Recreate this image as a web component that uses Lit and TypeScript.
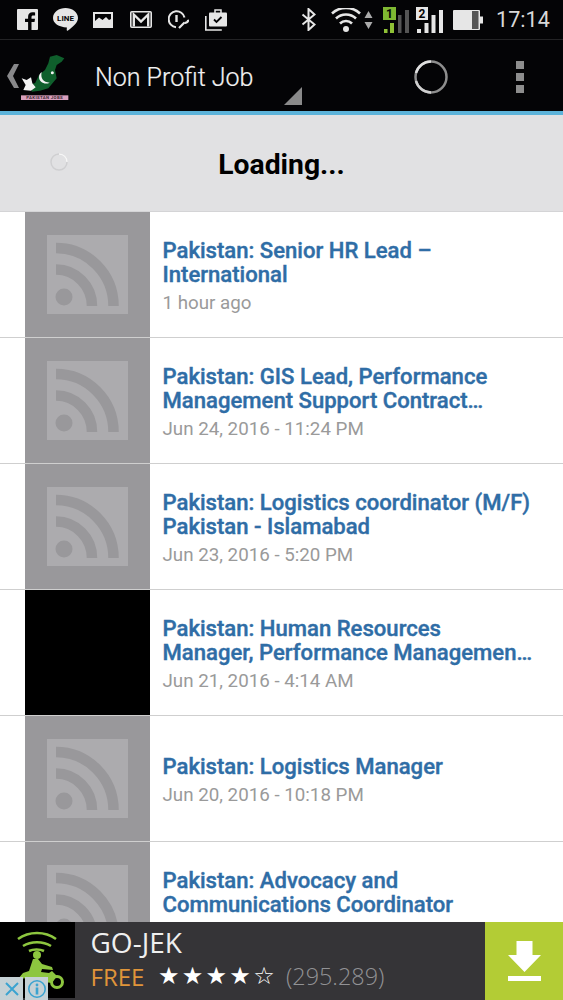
import { LitElement, html, css, svg } from "lit";
import { customElement } from "lit/decorators.js";

const items = [
  { t: "Pakistan: Senior HR Lead –\nInternational", d: "1 hour ago" },
  { t: "Pakistan: GIS Lead, Performance\nManagement Support Contract…", d: "Jun 24, 2016 - 11:24 PM" },
  { t: "Pakistan: Logistics coordinator (M/F)\nPakistan - Islamabad", d: "Jun 23, 2016 - 5:20 PM" },
  { t: "Pakistan: Human Resources\nManager, Performance Managemen…", d: "Jun 21, 2016 - 4:14 AM", black: true },
  { t: "Pakistan: Logistics Manager", d: "Jun 20, 2016 - 10:18 PM" },
  { t: "Pakistan: Advocacy and\nCommunications Coordinator", d: "" },
];

const rss = svg`<svg class="rss" viewBox="0 0 81 79">
  <rect width="81" height="79" fill="#acabae"/>
  <circle cx="17" cy="62" r="8.5" fill="#99989b"/>
  <path d="M9 34.5A36 36.5 0 0 1 45 71" fill="none" stroke="#99989b" stroke-width="10.5"/>
  <path d="M9 13A57.5 58 0 0 1 66.5 71" fill="none" stroke="#99989b" stroke-width="10.5"/>
</svg>`;

@customElement("app-root")
export class AppRoot extends LitElement {
  static styles = css`
    :host { display: block; width: 563px; height: 1000px; overflow: hidden; font-family: Roboto, sans-serif; background: #fff; }
    .page { height: 1000px; display: flex; flex-direction: column; }
    .status { height: 39px; flex: none; background: #040406; border-bottom: 1px solid #232325; display: flex; align-items: center; padding-left: 17px; color: #e6e6e6; }
    .status svg { display: block; flex: none; }
    .ls { display: flex; align-items: center; }
    .rs { display: flex; align-items: center; margin-left: auto; }
    .g15 { margin-left: 15px; }
    .g16 { margin-left: 16px; }
    .g17 { margin-left: 17px; }
    .g3 { margin-left: 3px; }
    .g10 { margin-left: 10px; }
    .g7 { margin-left: 7px; }
    .clock { font-size: 21.6px; width: 54px; margin-left: 13px; margin-right: 13px; color: #d8d8d8; white-space: nowrap; }
    .bar { height: 71px; flex: none; background: #040406; display: flex; align-items: center; position: relative; }
    .chev { width: 25px; flex: none; margin-left: 3px; margin-top: 1px; }
    .logo { position: absolute; left: 15px; top: 10px; }
    .name { color: #f2f2f2; font-size: 25px; font-weight: 300; margin-left: 67px; margin-top: 4px; flex: none; -webkit-text-stroke: 0.2px #f2f2f2; }
    .tri { position: absolute; left: 283px; top: 46px; }
    .spin { position: absolute; left: 413px; top: 19px; }
    .dots { position: absolute; left: 516px; top: 21px; display: flex; flex-direction: column; gap: 4px; }
    .dots i { display: block; width: 8px; height: 8px; background: #8d8d8d; }
    .blue { height: 4px; flex: none; background: #5cb3da; }
    .load { height: 96px; flex: none; background: #e1e1e3; display: flex; align-items: center; justify-content: center; position: relative; border-bottom: 1px solid #d4d4d6; }
    .load b { font-size: 28.3px; font-weight: 700; color: #000; margin-top: 2px; }
    .load svg { position: absolute; left: 49px; top: 37px; }
    .list { flex: 1; min-height: 0; overflow: hidden; }
    .row { height: 125px; border-bottom: 1px solid #cfcfcf; padding-left: 25px; display: flex; align-items: center; }
    .thumb { width: 125px; height: 125px; flex: none; background: #99989b; display: flex; align-items: center; justify-content: center; }
    .thumb.black { background: #000; }
    .rss { width: 81px; height: 79px; display: block; }
    .text { margin-left: 12.5px; min-width: 0; padding-top: 4px; }
    .title { color: #2f6da6; font-size: 22.1px; font-weight: 500; line-height: 24px; white-space: pre; -webkit-text-stroke: 0.4px #2f6da6; }
    .date { color: #9a9a9a; font-size: 18.75px; line-height: 24px; margin-top: 5px; min-height: 24px; }
    .ad { height: 78px; flex: none; background: #353437; display: flex; position: relative; font-family: "Open Sans", sans-serif; }
    .icon { width: 75px; height: 76px; background: #000; flex: none; }
    .info { margin-left: 15.5px; flex: 1; min-width: 0; }
    .app { color: #efefef; font-size: 28px; line-height: 36px; margin-top: 2px; }
    .meta { display: flex; align-items: center; height: 34px; margin-top: -1px; white-space: nowrap; }
    .free { color: #e0953a; font-size: 24px; }
    .stars { color: #fff; font-size: 24px; margin-left: 13.5px; letter-spacing: 2.3px; font-family: "DejaVu Sans", sans-serif; }
    .count { color: #929295; font-size: 23.4px; margin-left: 9px; font-weight: 300; }
    .dl { width: 78px; flex: none; background: #b3cc35; display: flex; align-items: center; justify-content: center; }
    .badges { position: absolute; left: 0; bottom: 0; display: flex; gap: 2px; }
    .badges span { width: 23px; height: 23px; background: #c5d1d5; display: flex; align-items: center; justify-content: center; }
  `;

  render() {
    return html`<div class="page">
      <div class="status">
        <div class="ls">
          <svg width="21" height="21" viewBox="0 0 21 21"><rect width="21" height="21" rx="1" fill="#e6e6e6"/><path d="M14.500 21v-8h3l.5-3.200h-3.500V8c0-1 .4-1.600 1.700-1.600h1.900V3.400c-.6-.1-1.600-.2-2.600-.2-2.700 0-4.400 1.600-4.400 4.400v2.200H8V13h3.100v8z" fill="#040406"/></svg>
          <svg class="g15" width="25" height="23" viewBox="0 0 25 23"><path d="M12.500 0C19 0 25 4 25 10c0 5-5.500 9-10 12.500-.6.5-1.400.2-1.300-.7l.2-2.300C6 19 0 15.500 0 10 0 4 6 0 12.500 0z" fill="#e6e6e6"/><text x="12.500" y="12.500" font-family="Roboto" font-size="8" font-weight="700" text-anchor="middle" fill="#040406">LINE</text></svg>
          <svg class="g15" width="20" height="16" viewBox="0 0 20 16"><rect width="20" height="16" fill="#e6e6e6"/><path d="M2 2h16v5l-2 1-3-3-3.500 3L6 5.500 2 9z" fill="#040406"/></svg>
          <svg class="g17" width="22" height="17" viewBox="0 0 22 17"><rect x="0.800" y="0.800" width="20.400" height="15.400" rx="1" fill="none" stroke="#e6e6e6" stroke-width="1.600"/><path d="M3.800 15.500V3.500L11 10.500 18.200 3.500V15.500" fill="none" stroke="#e6e6e6" stroke-width="2.400"/></svg>
          <svg class="g16" width="21" height="19" viewBox="0 0 21 19"><path d="M8 17.200A8 8 0 1 1 16.500 7.500" fill="none" stroke="#e6e6e6" stroke-width="2"/><path d="M7.300 5h2.400v7H7.300z" fill="#e6e6e6"/><path d="M11 18l5.500-5.500m0 0a2.500 2.500 0 0 0 3.500-2.800" fill="none" stroke="#e6e6e6" stroke-width="2.200"/></svg>
          <svg class="g16" width="22" height="22" viewBox="0 0 22 22"><path d="M.8 7v14h16" fill="none" stroke="#e6e6e6" stroke-width="1.600"/><rect x="4" y="3.500" width="18" height="14" rx="1" fill="#e6e6e6"/><path d="M10 4V1h6v3" fill="none" stroke="#e6e6e6" stroke-width="1.500"/><path d="M9 10.500l2.500 2.500 5-5" fill="none" stroke="#040406" stroke-width="1.800"/></svg>
        </div>
        <div class="rs">
          <svg width="15" height="23" viewBox="0 0 15 23"><path d="M1.500 6.500l12 10-6 5.500V1l6 5.500-12 10" fill="none" stroke="#e6e6e6" stroke-width="2"/></svg>
          <svg class="g15" width="30" height="24" viewBox="0 0 30 24"><circle cx="15" cy="21" r="3" fill="#e6e6e6"/><path d="M9 15.500a8.500 8.500 0 0 1 12 0M5 10.500a14.500 14.500 0 0 1 20 0M1 5.500a20.500 20.500 0 0 1 28 0" fill="none" stroke="#e6e6e6" stroke-width="2.600"/></svg>
          <svg class="g3" width="9" height="20" viewBox="0 0 9 20"><path d="M4.500 1L8.500 8H.5zM4.500 19L.5 12h8z" fill="#aaa"/></svg>
          <svg class="g10" width="26" height="26" viewBox="0 0 26 26"><rect x="0" y="0" width="13" height="13" fill="#7fb832"/><text x="6.500" y="11" font-family="Roboto" font-size="12" font-weight="700" text-anchor="middle" fill="#040406">1</text><rect x="1" y="22" width="3.500" height="4" fill="#8fc136"/><rect x="7" y="16" width="4" height="10" fill="#8fc136"/><rect x="15" y="8" width="3.500" height="18" fill="#555"/><rect x="22" y="3" width="4" height="23" fill="#555"/></svg>
          <svg class="g7" width="27" height="26" viewBox="0 0 27 26"><rect x="0" y="0" width="12" height="13" fill="#e6e6e6"/><text x="6" y="11" font-family="Roboto" font-size="12" font-weight="700" text-anchor="middle" fill="#040406">2</text><rect x="1" y="22" width="4" height="4" fill="#e6e6e6"/><rect x="8.500" y="16" width="4" height="10" fill="#e6e6e6"/><rect x="15.500" y="8" width="4" height="18" fill="#e6e6e6"/><rect x="23" y="3" width="4" height="23" fill="#e6e6e6"/></svg>
          <svg class="g10" width="30" height="20" viewBox="0 0 30 20"><rect width="27" height="20" rx="1" fill="#e6e6e6"/><rect x="19" y="1" width="6.500" height="18" fill="#555"/><rect x="27" y="6.500" width="3" height="7" fill="#e6e6e6"/></svg>
          <span class="clock">17:14</span>
        </div>
      </div>
      <div class="bar">
        <svg class="chev" height="26" viewBox="0 0 25 26"><path d="M11 1L4 13l7 12h5L10 13 16 1z" fill="#88888a"/></svg>
        <svg class="logo" width="60" height="55" viewBox="0 0 180 165">
          <path d="M105 20L125 15 148 25 140 35 125 45 120 60 125 85 100 115 75 122 50 125 55 100 60 100 72 75 90 60 100 40z" fill="#0f5f2c"/>
          <path d="M20 85L35 90 48 82 52 100 62 112 48 122 25 120 32 105z" fill="#f3f3f3"/>
          <path d="M80 66C76 84 84 97 104 98 90 105 72 97 72 81 72 75 75 69 80 66z" fill="#f3f3f3"/>
          <circle cx="112" cy="68" r="4.500" fill="#f3f3f3"/>
          <rect x="18" y="136" width="142" height="14" fill="#d9a0bd"/>
          <text x="89" y="147.500" font-family="Roboto" font-size="13" font-weight="700" text-anchor="middle" letter-spacing="1" fill="#3a2a33">PAKISTAN JOBS</text>
        </svg>
        <span class="name">Non Profit Job</span>
        <svg class="tri" width="20" height="20" viewBox="0 0 20 20"><path d="M19 1v18H1z" fill="#8a8a8a"/></svg>
        <svg class="spin" width="36" height="36" viewBox="0 0 36 36"><circle cx="18" cy="18" r="15.500" fill="none" stroke="#8e8e8e" stroke-width="2.500"/><path d="M3 14A15.500 15.500 0 0 1 18 2.500" fill="none" stroke="#dfdfdf" stroke-width="2.500"/><path d="M3 22A15.500 15.500 0 0 0 18 33.500" fill="none" stroke="#cfcfcf" stroke-width="2.500"/></svg>
        <div class="dots"><i></i><i></i><i></i></div>
      </div>
      <div class="blue"></div>
      <div class="load">
        <svg width="20" height="20" viewBox="0 0 20 20"><circle cx="10" cy="10" r="8" fill="none" stroke="#cfcfd1" stroke-width="1.500"/><path d="M10 2a8 8 0 0 1 8 8" fill="none" stroke="#f6f6f6" stroke-width="1.500"/></svg>
        <b>Loading...</b>
      </div>
      <div class="list">
        ${items.map((it) => html`<div class="row">
          <div class="thumb ${it.black ? "black" : ""}">${it.black ? "" : rss}</div>
          <div class="text">
            <div class="title">${it.t}</div>
            <div class="date">${it.d}</div>
          </div>
        </div>`)}
      </div>
      <div class="ad">
        <div class="icon">
          <svg width="75" height="76" viewBox="0 0 75 76">
            <path d="M18 17c11-8 27-8 38 0M23 24c8-5 20-5 28 0M29 29c4-2 11-2 15 0" fill="none" stroke="#8dc63f" stroke-width="2.600"/>
            <circle cx="37" cy="33" r="4" fill="#8dc63f"/>
            <path d="M33 37l5 0 4 5 10 3 1 3-11-1-1 3 8 1 3-2 5 5-5 7-8-1-6-5-20 2 5-6 6-2z" fill="#8dc63f"/>
            <circle cx="57" cy="60" r="5.500" fill="none" stroke="#8dc63f" stroke-width="3"/>
          </svg>
        </div>
        <div class="info">
          <div class="app">GO-JEK</div>
          <div class="meta"><span class="free">FREE</span><span class="stars">★★★★☆</span><span class="count">(295.289)</span></div>
        </div>
        <div class="dl">
          <svg width="33" height="40" viewBox="0 0 33 40"><path d="M8.500 0h16v14H33L16.500 31 0 14h8.500z" fill="#fff"/><rect y="35" width="33" height="5" fill="#fff"/></svg>
        </div>
        <div class="badges">
          <span><svg width="16" height="16" viewBox="0 0 16 16"><path d="M2 2l12 12M14 2L2 14" stroke="#3ba3d0" stroke-width="2"/></svg></span>
          <span><svg width="20" height="20" viewBox="0 0 20 20"><circle cx="10" cy="10" r="8.200" fill="none" stroke="#3ba3d0" stroke-width="1.600"/><circle cx="10" cy="6" r="1.400" fill="#3ba3d0"/><rect x="8.700" y="8.500" width="2.600" height="7" fill="#3ba3d0"/></svg></span>
        </div>
      </div>
    </div>`;
  }
}
